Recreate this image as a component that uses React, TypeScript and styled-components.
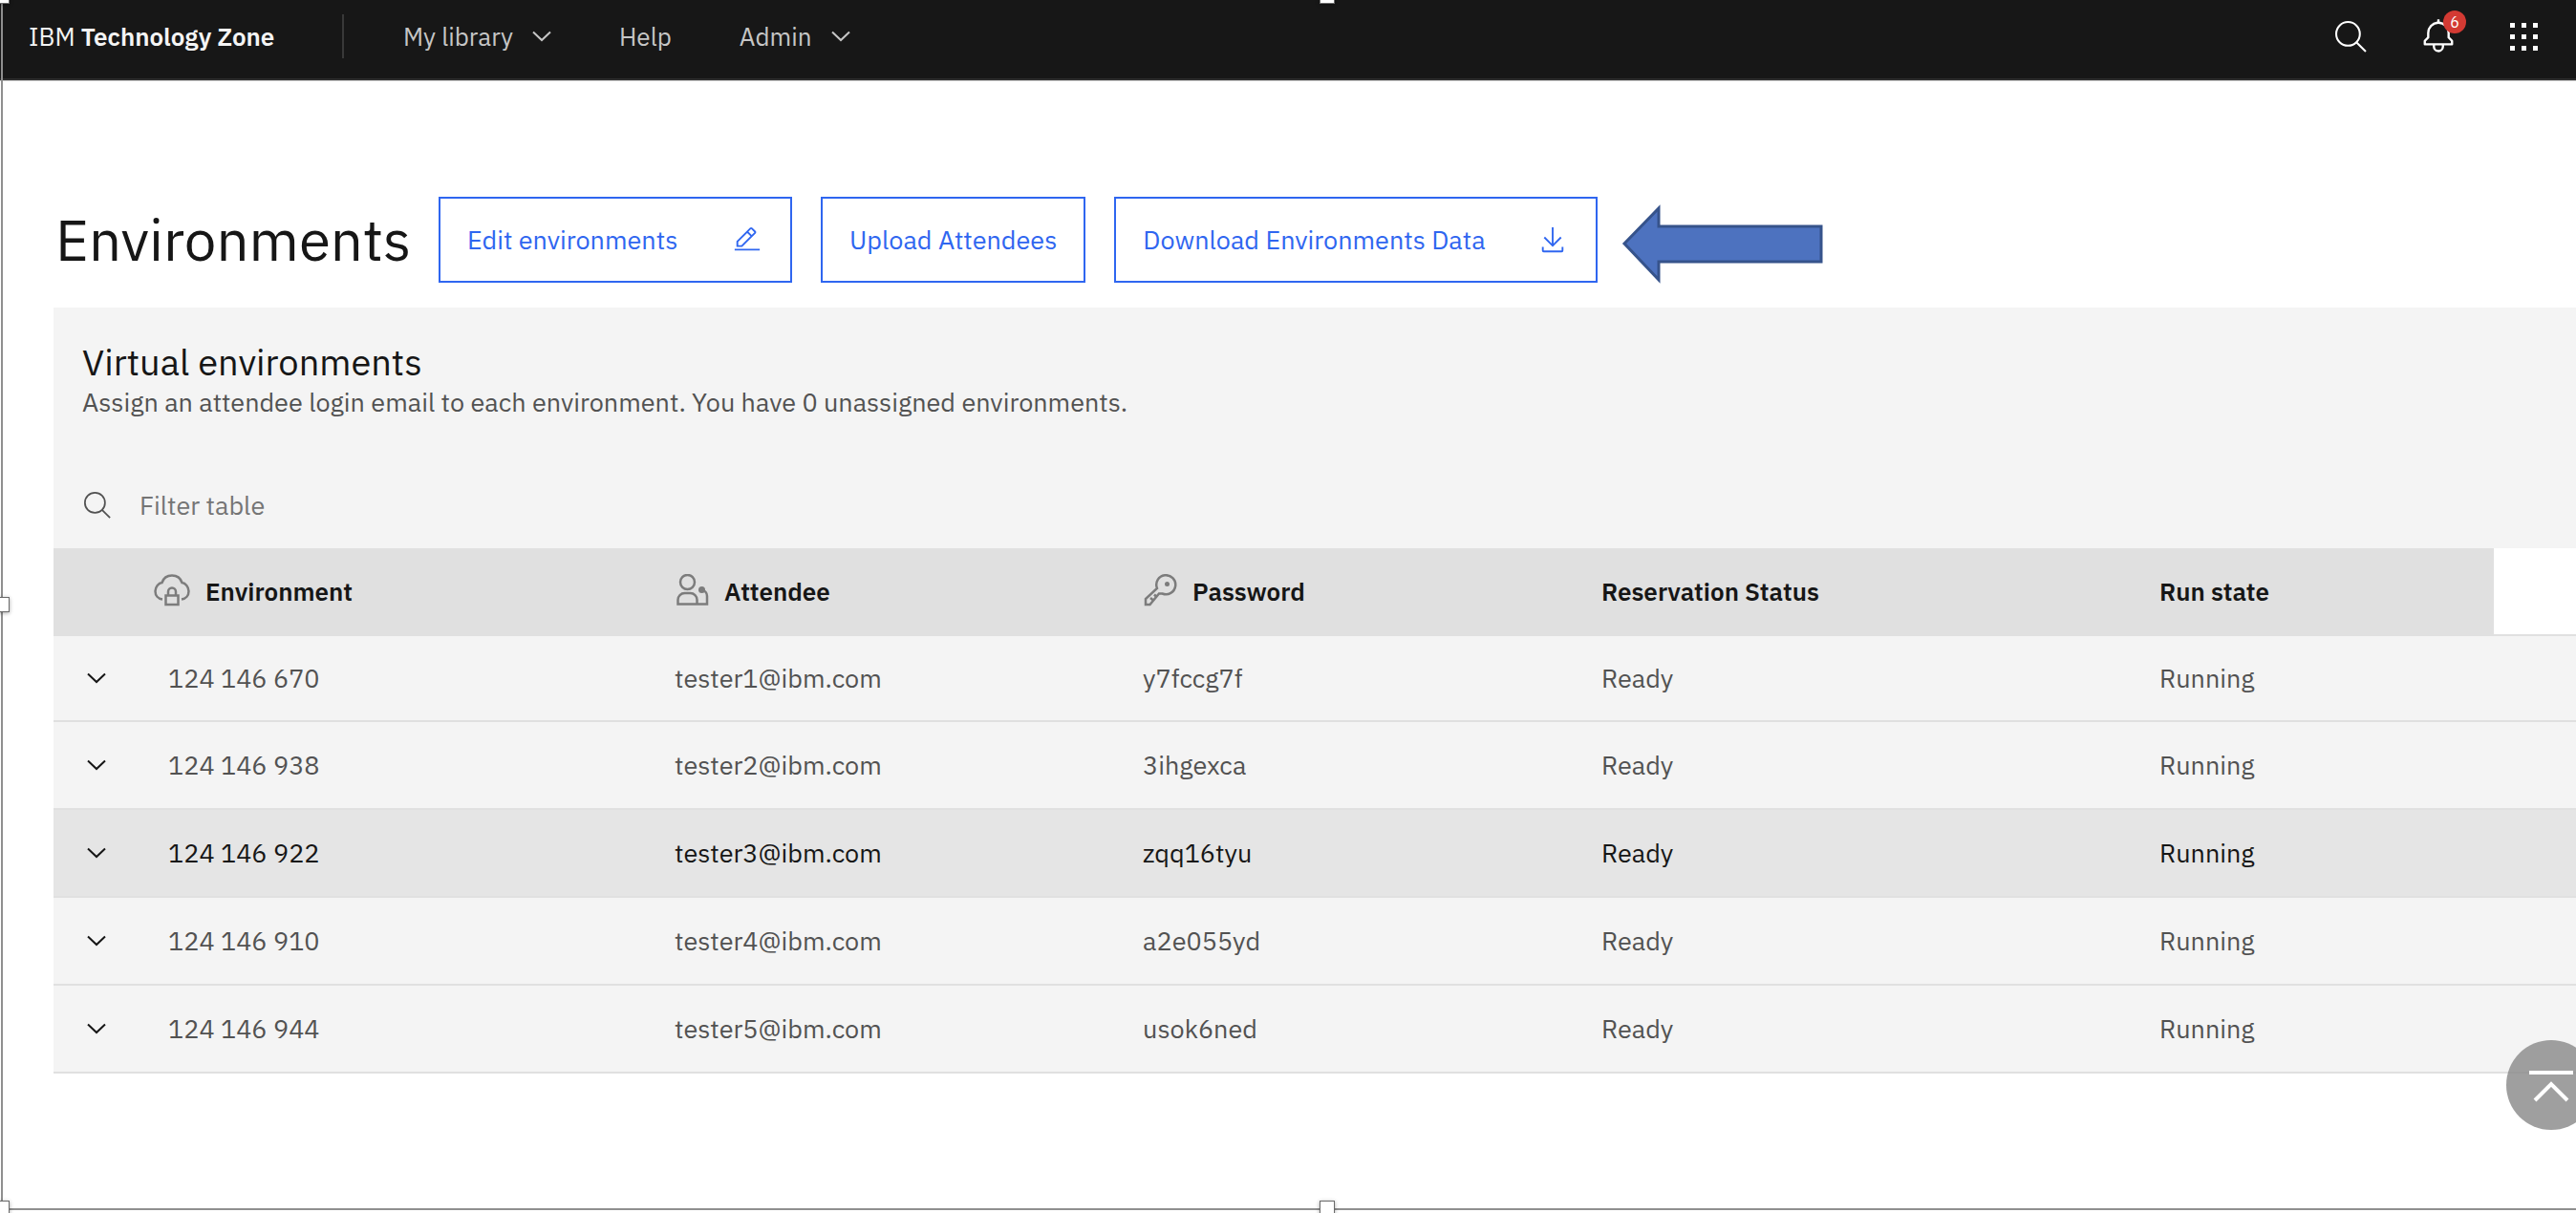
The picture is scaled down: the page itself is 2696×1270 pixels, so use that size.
import React from "react";
import styled, { createGlobalStyle } from "styled-components";

const GlobalStyle = createGlobalStyle`
  *, *::before, *::after { box-sizing: border-box; }
  body {
    margin: 0;
    background: #ffffff;
    color: #161616;
    font-family: "IBM Plex Sans", "Open Sans", "Noto Sans", sans-serif;
    font-size: 27px;
    line-height: 36px;
    overflow-x: hidden;
  }
  button, input { font: inherit; color: inherit; }
`;

const Page = styled.div`
  min-height: 100vh;
`;

const TopBar = styled.header`
  display: flex;
  align-items: center;
  height: 84px;
  padding: 0 40px 6px 30px;
  background: #171717;
  border-bottom: 2px solid #2c2c2c;
  box-shadow: 0 1px 0 #c6c6c6;
  font-size: 26px;
`;

const Brand = styled.a`
  color: #f4f4f4;
  text-decoration: none;
  white-space: nowrap;
  width: 328px;

  strong { font-weight: 600; }
`;

const Nav = styled.nav`
  display: flex;
  align-items: center;
  gap: 71px;
  height: 46px;
  padding-left: 62px;
  border-left: 2px solid #393939;
`;

const NavLink = styled.a`
  color: #c6c6c6;
  text-decoration: none;
`;

const NavMenu = styled.button`
  display: flex;
  align-items: center;
  gap: 20px;
  padding: 0;
  border: 0;
  background: none;
  color: #c6c6c6;
`;

const Actions = styled.div`
  display: flex;
  align-items: center;
  gap: 56px;
  margin-left: auto;
`;

const IconButton = styled.button`
  position: relative;
  display: flex;
  padding: 0;
  border: 0;
  background: none;
  color: #ffffff;
`;

const Badge = styled.span`
  position: absolute;
  top: -8px;
  right: -10px;
  width: 24px;
  height: 24px;
  border-radius: 50%;
  background: #d33a33;
  font-size: 16px;
  line-height: 24px;
  text-align: center;
`;

const Content = styled.main`
  padding: 122px 0 0 56px;
`;

const TitleRow = styled.div`
  display: flex;
  align-items: center;
  gap: 30px;
  margin-bottom: 26px;
`;

const Title = styled.h1`
  width: 373px;
  margin: 0;
  padding-left: 2px;
  font-size: 60px;
  line-height: 72px;
  font-weight: 400;
  white-space: nowrap;
`;

const OutlineButton = styled.button<{ $width: number }>`
  display: flex;
  align-items: center;
  justify-content: space-between;
  min-width: ${(p) => p.$width}px;
  height: 90px;
  padding: 0 28px;
  border: 2px solid #2f66f0;
  background: #ffffff;
  color: #2f66f0;
  white-space: nowrap;

  svg { margin-right: 2px; }
`;

const Panel = styled.section`
  background: #f4f4f4;
`;

const PanelHead = styled.div`
  padding: 33px 30px 0;
`;

const PanelTitle = styled.h2`
  margin: 0;
  font-size: 38px;
  line-height: 48px;
  font-weight: 400;
`;

const PanelText = styled.p`
  margin: 0;
  color: #525252;
`;

const Filter = styled.label`
  display: flex;
  align-items: center;
  gap: 30px;
  height: 90px;
  margin-top: 45px;
  padding: 0 32px;
  color: #525252;
`;

const FilterInput = styled.input`
  flex: 1;
  padding: 0;
  border: 0;
  outline: 0;
  background: none;

  &::placeholder { color: #757575; opacity: 1; }
`;

const Table = styled.table`
  width: 100%;
  table-layout: fixed;
  border-collapse: separate;
  border-spacing: 0;
`;

const Col = styled.col<{ $width?: string }>`
  width: ${(p) => p.$width ?? "auto"};
`;

const HeadCell = styled.th<{ $inset?: number }>`
  height: 92px;
  padding: 0 0 0 ${(p) => p.$inset ?? 30}px;
  background: #e0e0e0;
  border-bottom: 2px solid #e0e0e0;
  text-align: left;
  font-size: 26px;
  font-weight: 600;
`;

const BlankCell = styled.td`
  background: #ffffff;
  border-bottom: 2px solid #e0e0e0;
`;

const HeadLabel = styled.div`
  display: flex;
  align-items: center;
  gap: 16px;

  svg { color: #7c7c7c; }
`;

const Row = styled.tr<{ $active: boolean }>`
  height: 92px;
  background: ${(p) => (p.$active ? "#e5e5e5" : "#f4f4f4")};
  color: ${(p) => (p.$active ? "#161616" : "#525252")};

  &:first-child { height: 90px; }
`;

const Cell = styled.td`
  padding: 0 0 0 30px;
  border-bottom: 2px solid #e0e0e0;
`;

const Expand = styled.button`
  display: flex;
  padding: 0 5px;
  border: 0;
  background: none;
  color: #161616;
`;

const Pointer = styled.svg`
  display: block;
  width: 212px;
  height: 90px;
  margin-left: -4px;
  overflow: visible;
`;

const ToTop = styled.button`
  position: fixed;
  right: -21px;
  bottom: 87px;
  display: flex;
  align-items: center;
  justify-content: center;
  width: 94px;
  height: 94px;
  padding: 0;
  border: 0;
  border-radius: 50%;
  background: rgba(141, 141, 141, 0.84);
  color: #ffffff;
`;

const SelectionFrame = styled.div`
  position: fixed;
  inset: 0 0 3px 1px;
  border-left: 2px solid #8f8f8f;
  border-bottom: 2px solid #8f8f8f;
  pointer-events: none;
`;

const Handle = styled.span<{ $left: string; $top: string }>`
  position: absolute;
  left: ${(p) => p.$left};
  top: ${(p) => p.$top};
  width: 16px;
  height: 16px;
  margin: -8px 0 0 -9px;
  border: 1px solid #6a6a6a;
  background: #ffffff;
  box-shadow: 0 1px 4px rgba(0, 0, 0, 0.35);
`;

const Chevron = () => (
  <svg width="20" height="12" viewBox="0 0 20 12" fill="none" stroke="currentColor" strokeWidth="2" aria-hidden="true">
    <path d="M1 1.500l9 8.500 9-8.500" />
  </svg>
);

const SearchIcon = ({ size }: { size: number }) => (
  <svg width={size} height={size} viewBox="0 0 32 32" fill="none" stroke="currentColor" strokeWidth="2" aria-hidden="true">
    <circle cx="13" cy="13" r="12" />
    <path d="M21.500 21.500L31 31" />
  </svg>
);

const BellIcon = () => (
  <svg width="38" height="38" viewBox="0 0 32 32" fill="currentColor" aria-hidden="true">
    <path d="M28.7071,19.293,26,16.5859V13a10.0136,10.0136,0,0,0-9-9.9492V1H15V3.0508A10.0136,10.0136,0,0,0,6,13v3.5859L3.2929,19.293A1,1,0,0,0,3,20v3a1,1,0,0,0,1,1h7v.7768a5.152,5.152,0,0,0,4.5,5.1987A5.0057,5.0057,0,0,0,21,25V24h7a1,1,0,0,0,1-1V20A1,1,0,0,0,28.7071,19.293ZM19,25a3,3,0,0,1-6,0V24h6Zm8-3H5V20.4141L7.707,17.707A1,1,0,0,0,8,17V13a8,8,0,0,1,16,0v4a1,1,0,0,0,.293.707L27,20.4141Z" />
  </svg>
);

const GridIcon = () => (
  <svg width="29" height="29" viewBox="0 0 29 29" fill="currentColor" aria-hidden="true">
    {[0, 12, 24].map((y) => [0, 12, 24].map((x) => <rect key={`${x}-${y}`} x={x} y={y} width="5" height="5" />))}
  </svg>
);

const EditIcon = () => (
  <svg width="30" height="30" viewBox="0 0 32 32" fill="currentColor" aria-hidden="true">
    <path d="M2 26h28v2H2zM25.4 9c.8-.8.8-2 0-2.8l-3.6-3.6c-.8-.8-2-.8-2.8 0l-15 15V24h6.4L25.4 9zM20.4 4L24 7.6l-3 3L17.4 7 20.4 4zM6 22v-3.6l10-10 3.6 3.6-10 10H6z" />
  </svg>
);

const DownloadIcon = () => (
  <svg width="30" height="30" viewBox="0 0 32 32" fill="currentColor" aria-hidden="true">
    <path d="M26 24v4H6v-4H4v4a2 2 0 002 2h20a2 2 0 002-2v-4zM26 14l-1.41-1.41L17 20.17V2h-2v18.17l-7.59-7.58L6 14l10 10z" />
  </svg>
);

const CloudLockIcon = () => (
  <svg width="38" height="36" viewBox="0 0 38 36" fill="none" stroke="currentColor" strokeWidth="2.500" aria-hidden="true">
    <path d="M9 26.500c-4.500-.5-7.500-4-7.500-8.500s3.500-8.500 7-9C10 4.500 14 1.500 19 1.500S28 4.500 29.500 9c3.500.5 7 4.500 7 9s-3 8-7.500 8.500" />
    <path d="M12.500 22.500h13v9.500h-13zM15 22v-3.500a4 4 0 018 0V22" />
  </svg>
);

const AttendeeIcon = () => (
  <svg width="36" height="36" viewBox="0 0 36 36" fill="none" stroke="currentColor" strokeWidth="2.500" aria-hidden="true">
    <circle cx="13.500" cy="8.500" r="7.500" />
    <path d="M3.500 31.500V27a7 7 0 017-7h6a7 7 0 017 7v4.500zM23.500 31.500H34V23a6 6 0 00-5-6" />
    <circle cx="28.500" cy="16.500" r="3.500" fill="currentColor" stroke="none" />
  </svg>
);

const KeyIcon = () => (
  <svg width="36" height="36" viewBox="0 0 36 36" fill="none" stroke="currentColor" strokeWidth="2.500" aria-hidden="true">
    <path d="M15 15a10 10 0 115.500 5.500L17 20.500 7.500 32H3v-6z" />
    <path d="M11 27.500l-3-2.500M14.500 24l-2.500-2.500" />
    <circle cx="25.500" cy="10.500" r="2.500" fill="currentColor" stroke="none" />
  </svg>
);

const environments = [
  { id: "124 146 670", attendee: "tester1@ibm.com", password: "y7fccg7f" },
  { id: "124 146 938", attendee: "tester2@ibm.com", password: "3ihgexca" },
  { id: "124 146 922", attendee: "tester3@ibm.com", password: "zqq16tyu", active: true },
  { id: "124 146 910", attendee: "tester4@ibm.com", password: "a2e055yd" },
  { id: "124 146 944", attendee: "tester5@ibm.com", password: "usok6ned" },
];

export default function App() {
  return (
    <Page>
      <GlobalStyle />
      <TopBar>
        <Brand href="#">
          IBM <strong>Technology Zone</strong>
        </Brand>
        <Nav>
          <NavMenu type="button">
            My library <Chevron />
          </NavMenu>
          <NavLink href="#">Help</NavLink>
          <NavMenu type="button">
            Admin <Chevron />
          </NavMenu>
        </Nav>
        <Actions>
          <IconButton type="button" aria-label="Search">
            <SearchIcon size={33} />
          </IconButton>
          <IconButton type="button" aria-label="Notifications">
            <BellIcon />
            <Badge>6</Badge>
          </IconButton>
          <IconButton type="button" aria-label="App switcher">
            <GridIcon />
          </IconButton>
        </Actions>
      </TopBar>

      <Content>
        <TitleRow>
          <Title>Environments</Title>
          <OutlineButton type="button" $width={370}>
            Edit environments <EditIcon />
          </OutlineButton>
          <OutlineButton type="button" $width={276}>
            Upload Attendees
          </OutlineButton>
          <OutlineButton type="button" $width={506}>
            Download Environments Data <DownloadIcon />
          </OutlineButton>
          <Pointer viewBox="0 0 212 90" fill="#4d72bf" stroke="#36538b" strokeWidth="3" aria-hidden="true">
            <path d="M2 49L38 12v19h170v37H38v19z" />
          </Pointer>
        </TitleRow>

        <Panel>
          <PanelHead>
            <PanelTitle>Virtual environments</PanelTitle>
            <PanelText>
              Assign an attendee login email to each environment. You have 0 unassigned environments.
            </PanelText>
          </PanelHead>
          <Filter>
            <SearchIcon size={28} />
            <FilterInput type="text" placeholder="Filter table" aria-label="Filter table" />
          </Filter>
          <Table>
            <colgroup>
              <Col $width="90px" />
              <Col $width="20.08%" />
              <Col $width="18.56%" />
              <Col $width="18.18%" />
              <Col $width="22.12%" />
              <Col />
              <Col $width="86px" />
            </colgroup>
            <thead>
              <tr>
                <HeadCell aria-label="Expand" />
                <HeadCell $inset={15}>
                  <HeadLabel>
                    <CloudLockIcon /> Environment
                  </HeadLabel>
                </HeadCell>
                <HeadCell>
                  <HeadLabel>
                    <AttendeeIcon /> Attendee
                  </HeadLabel>
                </HeadCell>
                <HeadCell>
                  <HeadLabel>
                    <KeyIcon /> Password
                  </HeadLabel>
                </HeadCell>
                <HeadCell>Reservation Status</HeadCell>
                <HeadCell>Run state</HeadCell>
                <BlankCell />
              </tr>
            </thead>
            <tbody>
              {environments.map((env) => (
                <Row key={env.id} $active={Boolean(env.active)}>
                  <Cell>
                    <Expand type="button" aria-label={`Expand ${env.id}`}>
                      <Chevron />
                    </Expand>
                  </Cell>
                  <Cell>{env.id}</Cell>
                  <Cell>{env.attendee}</Cell>
                  <Cell>{env.password}</Cell>
                  <Cell>Ready</Cell>
                  <Cell>Running</Cell>
                  <Cell />
                </Row>
              ))}
            </tbody>
          </Table>
        </Panel>
      </Content>

      <ToTop type="button" aria-label="Back to top">
        <svg width="48" height="48" viewBox="0 0 48 48" fill="none" stroke="currentColor" strokeWidth="4" aria-hidden="true">
          <path d="M1 11h46M7 40l17-17 17 17" />
        </svg>
      </ToTop>

      <SelectionFrame aria-hidden="true">
        <Handle $left="0%" $top="-4px" />
        <Handle $left="51.5%" $top="-4px" />
        <Handle $left="0%" $top="50%" />
        <Handle $left="0%" $top="100%" />
        <Handle $left="51.5%" $top="100%" />
      </SelectionFrame>
    </Page>
  );
}
